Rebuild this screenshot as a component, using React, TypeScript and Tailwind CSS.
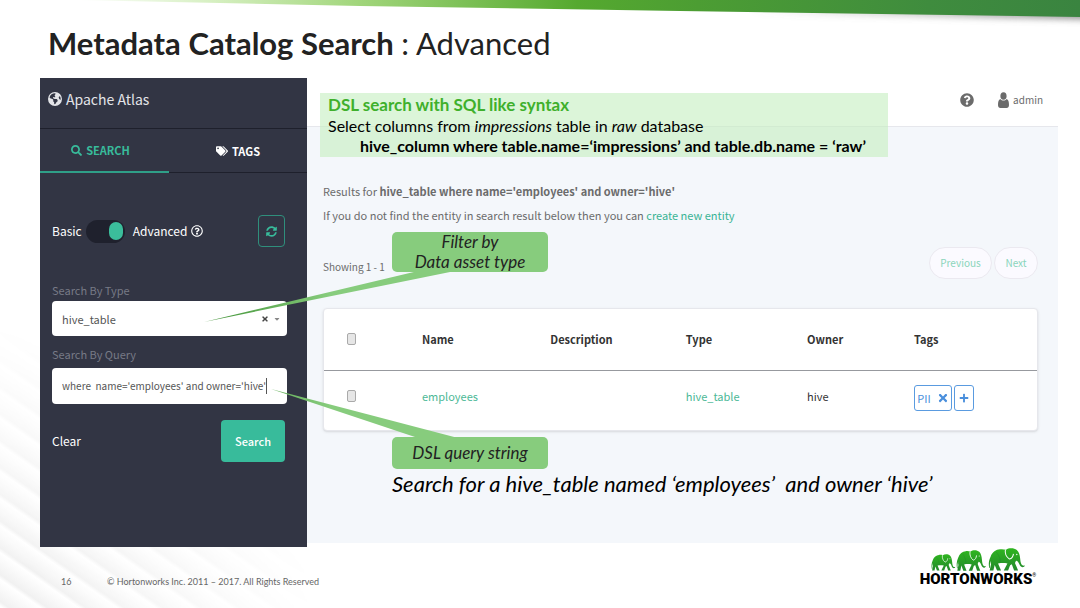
import type { ReactNode } from "react";
import { FaEarthAmericas } from "react-icons/fa6";
import {
  FaCaretDown,
  FaPlus,
  FaQuestionCircle,
  FaRegQuestionCircle,
  FaSearch,
  FaSyncAlt,
  FaTags,
  FaTimes,
} from "react-icons/fa";

function TopBanner() {
  return (
    <svg
      className="absolute inset-x-0 top-0 h-7 w-full"
      viewBox="0 0 1080 28"
      preserveAspectRatio="none"
      aria-hidden="true"
    >
      <defs>
        <linearGradient id="banner" x1="0" y1="0" x2="1" y2="0">
          <stop offset="0" stopColor="#ffffff" />
          <stop offset="0.14" stopColor="#d5efc0" />
          <stop offset="0.28" stopColor="#a2d67c" />
          <stop offset="0.5" stopColor="#55a92f" />
          <stop offset="0.62" stopColor="#4c9d33" />
          <stop offset="0.85" stopColor="#3f8c3e" />
          <stop offset="1" stopColor="#3a8440" />
        </linearGradient>
        <linearGradient id="bannerFade" x1="0" y1="0" x2="1" y2="0">
          <stop offset="0.5" stopColor="#777" stopOpacity="0" />
          <stop offset="1" stopColor="#777" stopOpacity="0.8" />
        </linearGradient>
        <filter id="soften" x="-5%" y="-100%" width="110%" height="300%">
          <feGaussianBlur stdDeviation="3" />
        </filter>
      </defs>
      <path d="M400 0H1100V20L400 7Z" fill="url(#bannerFade)" filter="url(#soften)" />
      <path d="M75 0H1080V17L680 11L360 6Z" fill="url(#banner)" />
    </svg>
  );
}

function Elephant({ transform }: { transform: string }) {
  return (
    <g transform={transform}>
      <path
        d="M4 62C1 50 2 38 8 26C13 12 24 5 36 4C42 3 48 4 54 5C62 -1 78 -1 86 6C93 12 95 22 96 32C97 44 99 52 104 54C107 55 109 53 110 54C108 61 98 61 94 51C91 43 88 39 84 39C82 42 80 45 81 48L90 69H78L71 50L66 53L60 69H47L58 48C50 46 38 46 30 48L39 69H27L20 52L16 69H5L9 50C8 46 7 42 8 38C6 44 5 52 6 60Z"
        fill="url(#hide)"
      />
      <path d="M52 5C50 16 54 27 64 34C72 32 75 26 76 18" fill="none" stroke="#fff" strokeWidth="3" />
      <path d="M24 12C32 22 38 32 36 47" fill="none" stroke="#1f7a26" strokeWidth="2" strokeOpacity="0.4" />
      <circle cx="86" cy="20" r="2" fill="#fff" />
    </g>
  );
}

function HortonworksLogo() {
  return (
    <div className="flex w-32 flex-col items-center">
      <svg className="h-6 w-24" viewBox="0 0 96 24" aria-hidden="true">
        <defs>
          <linearGradient id="hide" x1="0" y1="0" x2="0" y2="1">
            <stop offset="0" stopColor="#2fb51f" />
            <stop offset="1" stopColor="#238a2c" />
          </linearGradient>
        </defs>
        <Elephant transform="translate(1 7) scale(0.22 0.24)" />
        <Elephant transform="translate(26 3) scale(0.27 0.3)" />
        <Elephant transform="translate(58 1) scale(0.335 0.325)" />
      </svg>
      <p className="flex font-['Roboto',sans-serif] text-[15px] leading-4 font-black text-black">
        HORTONWORKS
        <span className="text-[5px] leading-2 font-normal">®</span>
      </p>
    </div>
  );
}

function UserIcon() {
  return (
    <svg className="h-4 w-[11px]" viewBox="0 0 11 16" fill="currentColor" aria-hidden="true">
      <ellipse cx="5.5" cy="4" rx="3.1" ry="3.8" />
      <path d="M2.4 7C0.6 7.4 0 10 0 13C0 15 1 16 2.4 16H8.6C10 16 11 15 11 13C11 10 10.4 7.4 8.6 7C7 9 4 9 2.4 7Z" />
    </svg>
  );
}

function Tab({ active, icon, children }: { active?: boolean; icon: ReactNode; children: ReactNode }) {
  return (
    <button
      type="button"
      role="tab"
      aria-selected={!!active}
      className={
        active
          ? "flex w-[129px] items-center justify-center gap-1 border-b-2 border-[#2f9f88] pr-2 text-[11px] font-bold text-[#38bb9b]"
          : "flex flex-1 items-center justify-center gap-1 border-b border-[#1e202c] text-[11px] font-bold text-white"
      }
    >
      {icon}
      {children}
    </button>
  );
}

function Sidebar() {
  return (
    <aside className="flex h-[469px] w-[267px] shrink-0 flex-col bg-[#323544]">
      <h2 className="flex h-[51px] items-center gap-1 border-b border-[#1e202c] px-2 pb-2 text-sm text-[#e3e4e8]">
        <FaEarthAmericas className="size-3.5" />
        Apache Atlas
      </h2>
      <div role="tablist" className="flex h-11">
        <Tab active icon={<FaSearch className="size-[11px]" />}>
          SEARCH
        </Tab>
        <Tab icon={<FaTags className="size-3" />}>TAGS</Tab>
      </div>
      <form className="flex flex-col px-3 pr-5 pt-[42px] text-[11px]" onSubmit={(e) => e.preventDefault()}>
        <div className="flex h-8 items-center text-xs text-white">
          <label htmlFor="mode" className="flex items-center gap-1">
            Basic
            <input
              id="mode"
              type="checkbox"
              defaultChecked
              className="mr-1 flex h-[23px] w-[39px] appearance-none items-center justify-end rounded-full bg-[#1f212d] px-0.5 before:h-[18px] before:w-3.5 before:rounded-full before:bg-[#3bbd9b]"
            />
            Advanced
          </label>
          <FaRegQuestionCircle className="ml-1 size-3" />
          <button
            type="button"
            aria-label="Refresh"
            className="mr-0.5 ml-auto flex h-8 w-[27px] items-center justify-center rounded-sm border border-[#2f8f7c] text-[#38bb9b]"
          >
            <FaSyncAlt className="size-[11px]" />
          </button>
        </div>
        <label htmlFor="type" className="mt-8 leading-[22px] text-[#777a86]">
          Search By Type
        </label>
        <div className="relative">
          <select
            id="type"
            className="block h-[35px] w-full appearance-none rounded-sm bg-white px-2.5 text-[#555]"
          >
            <option>hive_table</option>
          </select>
          <div className="pointer-events-none absolute inset-y-0 right-1.5 flex items-center gap-1 text-[#444]">
            <FaTimes className="size-2" />
            <FaCaretDown className="size-2 text-[#888]" />
          </div>
        </div>
        <label htmlFor="query" className="mt-1 leading-7 text-[#777a86]">
          Search By Query
        </label>
        <div className="flex h-9 items-center overflow-hidden rounded-sm bg-white px-2.5 text-[10px] text-[#555]">
          <input
            id="query"
            defaultValue="where  name='employees' and owner='hive'"
            className="field-sizing-content outline-none"
          />
          <span className="h-4 w-px shrink-0 bg-[#555]" />
        </div>
        <div className="mt-4 flex items-center justify-between pr-0.5 text-white">
          <button type="button" className="text-xs">
            Clear
          </button>
          <button type="submit" className="h-[42px] w-16 rounded-sm bg-[#38bb9b] font-medium">
            Search
          </button>
        </div>
      </form>
    </aside>
  );
}

function Check({ label }: { label: string }) {
  return (
    <input
      type="checkbox"
      aria-label={label}
      className="block h-3 w-[9px] appearance-none rounded-[2px] border border-[#aaa] bg-[#e6e6e6]"
    />
  );
}

function ResultsTable() {
  return (
    <div className="mt-[29px] rounded-sm border border-[#e6e7ec] bg-white shadow-sm">
      <table className="w-full table-fixed text-left text-[11px] text-[#333]">
        <thead>
          <tr className="h-[61px] border-b border-[#97999e]">
            <th className="w-[98px] pl-[23px]">
              <Check label="Select all" />
            </th>
            <th className="w-[18%] p-0">Name</th>
            <th className="w-[19%] p-0">Description</th>
            <th className="w-[17%] p-0">Type</th>
            <th className="w-[15%] p-0">Owner</th>
            <th className="p-0">Tags</th>
          </tr>
        </thead>
        <tbody>
          <tr className="h-[60px]">
            <td className="pb-2 pl-[23px]">
              <Check label="Select employees" />
            </td>
            <td className="p-0 pb-2">
              <a href="#employees" className="text-[#4bb896]">
                employees
              </a>
            </td>
            <td />
            <td className="p-0 pb-2">
              <a href="#hive_table" className="text-[#4bb896]">
                hive_table
              </a>
            </td>
            <td className="p-0 pb-2">hive</td>
            <td className="p-0 pb-1">
              <div className="flex gap-0.5 text-[#4a8fdc]">
                <button
                  type="button"
                  className="flex h-[26px] w-[38px] items-center justify-center gap-1.5 rounded-[3px] border border-[#5a9be0]"
                >
                  PII
                  <FaTimes className="size-3" />
                </button>
                <button
                  type="button"
                  aria-label="Add tag"
                  className="flex h-[26px] w-5 items-center justify-center rounded-[3px] border border-[#5a9be0]"
                >
                  <FaPlus className="size-2.5" />
                </button>
              </div>
            </td>
          </tr>
        </tbody>
      </table>
    </div>
  );
}

function Results() {
  return (
    <main className="flex h-[465px] min-w-0 flex-1 flex-col bg-[#f4f7fb] text-[11px] text-[#6b6b6b]">
      <header className="flex h-[49px] shrink-0 items-center justify-end border-b border-[#e6e7ec] bg-white px-[15px] pb-1 text-[10px]">
        <button type="button" aria-label="Help">
          <FaQuestionCircle className="size-3.5" />
        </button>
        <a href="#admin" className="ml-6 flex items-center gap-1">
          <UserIcon />
          admin
        </a>
      </header>
      <section className="px-4 pt-13 pr-5">
        <p className="leading-6">
          Results for <strong>hive_table where name='employees' and owner='hive'</strong>
        </p>
        <p className="leading-6">
          If you do not find the entity in search result below then you can{" "}
          <a href="#create" className="text-[#38b394]">
            create new entity
          </a>
        </p>
        <div className="mt-5 flex h-8 items-center justify-between text-[10px]">
          <p className="pt-2">Showing 1 - 1</p>
          <div className="flex gap-0.5 text-[#8ad5bb]">
            <button type="button" className="h-8 w-[63px] rounded-full border border-[#ebe9f0] bg-[#fbfaff]">
              Previous
            </button>
            <button type="button" className="h-8 w-11 rounded-full border border-[#ebe9f0] bg-[#fbfaff]">
              Next
            </button>
          </div>
        </div>
        <ResultsTable />
      </section>
    </main>
  );
}

function Annotations() {
  return (
    <div className="pointer-events-none absolute inset-0 text-black">
      <div className="absolute top-[15px] left-[280px] w-[568px] bg-[#c5efc0]/60 px-2 py-0.5">
        <p className="text-[17px] leading-5 font-bold text-[#3fb02c]">DSL search with SQL like syntax</p>
        <p className="text-base leading-[22px]">
          Select columns from <em>impressions</em> table in <em>raw</em> database
        </p>
        <p className="pl-8 text-base leading-[18px] font-bold">
          hive_column where table.name=‘impressions’ and table.db.name = ‘raw’
        </p>
      </div>
      <svg className="absolute top-0 left-0 h-[469px] w-[520px]" viewBox="40 78 520 469" aria-hidden="true">
        <defs>
          <linearGradient id="tail" gradientUnits="userSpaceOnUse" x1="204" y1="0" x2="330" y2="0">
            <stop offset="0" stopColor="#3d8f32" />
            <stop offset="1" stopColor="#87cc7d" />
          </linearGradient>
        </defs>
        <path d="M204 322L418 271H455Z" fill="url(#tail)" />
        <path d="M271 389L418 438H458Z" fill="url(#tail)" />
      </svg>
      <p className="absolute top-[154px] left-[352px] w-[156px] rounded-[5px] bg-[#87cc7d] text-center text-[17px] leading-5 text-[#222] italic">
        Filter by
        <br />
        Data asset type
      </p>
      <p className="absolute top-[359px] left-[352px] w-[156px] rounded-[5px] bg-[#87cc7d] text-center text-[17px] leading-8 text-[#222] italic">
        DSL query string
      </p>
      <p className="absolute top-[394px] left-[352px] text-[22px] leading-6 whitespace-pre italic">
        Search for a hive_table named ‘employees’  and owner ‘hive’
      </p>
    </div>
  );
}

export default function App() {
  return (
    <div className="relative flex min-h-screen flex-col overflow-hidden bg-white font-['Lato','Liberation_Sans',sans-serif]">
      <div className="absolute bottom-0 left-0 h-72 w-80 bg-[repeating-linear-gradient(215deg,#ffffff_0px,#f1f1f1_18px,#ffffff_22px)] [mask-image:radial-gradient(ellipse_at_bottom_left,black_10%,transparent_70%)]" />
      <TopBanner />
      <h1 className="relative px-12 pt-[23px] text-[31px] leading-10 font-bold text-[#222]">
        Metadata Catalog Search <span className="font-normal">: Advanced</span>
      </h1>
      <div className="relative mt-[15px] mr-[22px] ml-10">
        <div className="flex font-['Noto_Sans_CJK_SC','Noto_Sans',sans-serif] leading-5">
          <Sidebar />
          <Results />
        </div>
        <Annotations />
      </div>
      <footer className="relative flex items-start pr-[38px] pl-[61px] text-[9px] text-[#666]">
        <span className="w-[46px] pt-7">16</span>
        <span className="pt-7">© Hortonworks Inc. 2011 – 2017. All Rights Reserved</span>
        <div className="ml-auto">
          <HortonworksLogo />
        </div>
      </footer>
    </div>
  );
}
